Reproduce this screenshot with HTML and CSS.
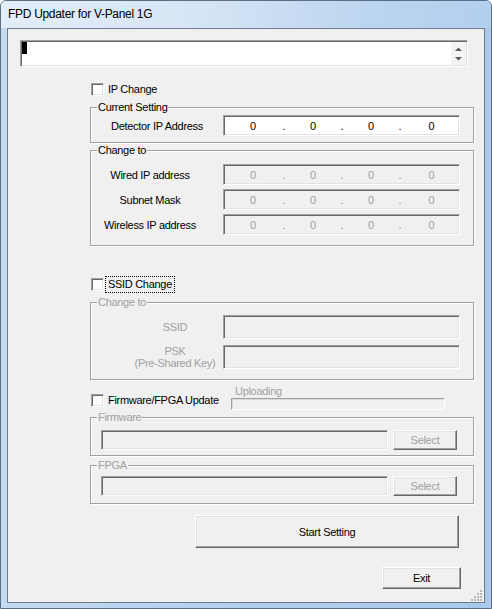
FILE: index.html
```html
<!DOCTYPE html>
<html>
<head>
<meta charset="utf-8">
<title>FPD Updater for V-Panel 1G</title>
<link rel="stylesheet" href="styles.css">
</head>
<body>
<div class="window">
  <div class="titlebar"><span class="title">FPD Updater for V-Panel 1G</span></div>
  <div class="frame-body">
    <div class="client">
      <div class="log">
        <span class="caret"></span>
        <div class="spin">
          <svg width="9" height="5" viewBox="0 0 9 5"><path d="M1 4 L4.5 0.5 L8 4 Z" fill="#5a5a5a"/></svg>
          <svg width="9" height="5" viewBox="0 0 9 5"><path d="M1 1 L4.5 4.5 L8 1 Z" fill="#5a5a5a"/></svg>
        </div>
      </div>

      <div class="main">
        <div class="check check-ip"><span class="box"></span><span class="check-label">IP Change</span></div>

        <fieldset class="group g-current">
          <legend>Current Setting</legend>
          <div class="rows">
            <div class="row">
              <span class="lbl lbl-current">Detector IP Address</span>
              <div class="ip ip-active"><span>0</span><i>.</i><span>0</span><i>.</i><span>0</span><i>.</i><span>0</span></div>
            </div>
          </div>
        </fieldset>

        <fieldset class="group g-change">
          <legend>Change to</legend>
          <div class="rows">
            <div class="row">
              <span class="lbl lbl-change">Wired IP address</span>
              <div class="ip ip-disabled"><span>0</span><i>.</i><span>0</span><i>.</i><span>0</span><i>.</i><span>0</span></div>
            </div>
            <div class="row">
              <span class="lbl lbl-change">Subnet Mask</span>
              <div class="ip ip-disabled"><span>0</span><i>.</i><span>0</span><i>.</i><span>0</span><i>.</i><span>0</span></div>
            </div>
            <div class="row">
              <span class="lbl lbl-change">Wireless IP address</span>
              <div class="ip ip-disabled"><span>0</span><i>.</i><span>0</span><i>.</i><span>0</span><i>.</i><span>0</span></div>
            </div>
          </div>
        </fieldset>

        <div class="check check-ssid"><span class="box"></span><span class="check-label focus">SSID Change</span></div>

        <fieldset class="group g-ssid disabled">
          <legend>Change to</legend>
          <div class="rows">
            <div class="row">
              <span class="lbl lbl-ssid">SSID</span>
              <div class="edit edit-ssid"></div>
            </div>
            <div class="row">
              <span class="lbl lbl-ssid">PSK<br>(Pre-Shared Key)</span>
              <div class="edit edit-ssid"></div>
            </div>
          </div>
        </fieldset>

        <div class="fw-row">
          <div class="check check-fw"><span class="box"></span><span class="check-label">Firmware/FPGA Update</span></div>
          <div class="upload">
            <span class="upload-label">Uploading</span>
            <div class="progress"></div>
          </div>
        </div>

        <fieldset class="group g-fw disabled">
          <legend>Firmware</legend>
          <div class="file-row">
            <div class="edit edit-file"></div>
            <div class="btn btn-select">Select</div>
          </div>
        </fieldset>

        <fieldset class="group g-fpga disabled">
          <legend>FPGA</legend>
          <div class="file-row">
            <div class="edit edit-file"></div>
            <div class="btn btn-select">Select</div>
          </div>
        </fieldset>

        <div class="btn btn-start">Start Setting</div>
        <div class="btn btn-exit">Exit</div>
      </div>

      <svg class="grip" width="12" height="12" viewBox="0 0 12 12">
        <g fill="#b8b8b8">
          <rect x="9" y="1" width="2" height="2"/>
          <rect x="6" y="4" width="2" height="2"/><rect x="9" y="4" width="2" height="2"/>
          <rect x="3" y="7" width="2" height="2"/><rect x="6" y="7" width="2" height="2"/><rect x="9" y="7" width="2" height="2"/>
          <rect x="0" y="10" width="2" height="2"/><rect x="3" y="10" width="2" height="2"/><rect x="6" y="10" width="2" height="2"/><rect x="9" y="10" width="2" height="2"/>
        </g>
      </svg>
    </div>
  </div>
</div>
</body>
</html>
```

FILE: styles.css
```css
* { box-sizing: border-box; }
html, body { margin: 0; padding: 0; }
body {
  width: 492px;
  height: 609px;
  overflow: hidden;
  font-family: "Liberation Sans", Arial, sans-serif;
  font-size: 11px;
  letter-spacing: -0.3px;
  color: #000;
  background: #fff;
}

.window {
  width: 492px;
  height: 609px;
  display: flex;
  flex-direction: column;
  border: 1px solid #5b6f84;
  border-radius: 6px 6px 0 0;
  background: linear-gradient(to right, #c4daf1, #b3cfee 50%, #a9c8ec);
}

.titlebar {
  height: 27px;
  flex: none;
  display: flex;
  align-items: center;
  padding-left: 7px;
  padding-bottom: 1px;
  border-radius: 5px 5px 0 0;
  background: linear-gradient(to right, #e3edf8 0%, #d6e5f5 40%, #bcd5f0 75%, #b2cfee 100%);
}
.title {
  font-size: 12px;
  letter-spacing: -0.3px;
  color: #000;
}

.frame-body {
  flex: 1;
  display: flex;
  padding: 0 6px 5px 6px;
}

.client {
  flex: 1;
  position: relative;
  display: flex;
  flex-direction: column;
  background: #f0f0f0;
  border: 1px solid #6c7b8b;
}

/* log box */
.log {
  margin: 11px 0 0 12px;
  width: 448px;
  height: 27px;
  display: flex;
  justify-content: space-between;
  background: #fff;
  border-top: 1px solid #a0a0a0;
  border-left: 1px solid #a0a0a0;
  border-right: 1px solid #fff;
  border-bottom: 1px solid #fff;
  box-shadow: inset 1px 1px 0 #696969, inset -1px -1px 0 #e3e3e3;
}
.caret {
  width: 5px;
  height: 12px;
  margin: 1px 0 0 1px;
  background: #000;
}
.spin {
  width: 15px;
  display: flex;
  flex-direction: column;
  justify-content: space-between;
  align-items: center;
  padding: 5px 1px 4px 0;
  background: #f4f4f4;
  margin: 1px 1px 1px 0;
}
.spin svg { display: block; }

/* main column */
.main {
  margin-left: 82px;
  width: 384px;
  display: flex;
  flex-direction: column;
  align-items: flex-start;
}

.check {
  display: flex;
  align-items: center;
  height: 13px;
  margin-left: 1px;
  gap: 4px;
  line-height: 13px;
}
.box {
  width: 13px;
  height: 13px;
  flex: none;
  background: #fff;
  border-top: 1px solid #a0a0a0;
  border-left: 1px solid #a0a0a0;
  border-right: 1px solid #fff;
  border-bottom: 1px solid #fff;
  box-shadow: inset 1px 1px 0 #696969, inset -1px -1px 0 #e3e3e3;
}
.check-label.focus {
  outline: 1px dotted #000;
  outline-offset: 1px;
  padding: 0 1px;
  margin-left: -1px;
}
.check-ip { margin-top: 16px; }
.check-ssid { margin-top: 32px; }

/* group boxes */
.group {
  margin: 0;
  padding: 0;
  min-width: 0;
  width: 384px;
  border: 1px solid #a0a0a0;
  box-shadow: inset 1px 1px 0 #fff, 1px 1px 0 #fff;
}
.group legend {
  margin-left: 6px;
  padding: 0 1px;
  line-height: 13px;
  height: 13px;
  background: #f0f0f0;
}
.group.disabled legend { color: #a0a0a0; }

.g-current { margin-top: 5px; }
.g-current .rows { padding: 1px 0 6px 0; }
.g-change { margin-top: 1px; }
.g-change .rows { padding: 7px 0 10px 0; display: flex; flex-direction: column; gap: 4px; }
.g-ssid { margin-top: 5px; }
.g-ssid .rows { padding: 6px 0 10px 0; display: flex; flex-direction: column; gap: 6px; }

.row {
  display: flex;
  align-items: center;
}
.lbl {
  flex: none;
  text-align: center;
  line-height: 12px;
}
.lbl-current { width: 132px; }
.lbl-change { width: 118px; margin-right: 14px; }
.lbl-ssid { width: 132px; padding-left: 36px; color: #a0a0a0; }

/* IP controls */
.ip {
  width: 237px;
  height: 21px;
  display: grid;
  grid-template-columns: 54px 8px 50px 8px 50px 8px 1fr;
  align-items: center;
  padding-left: 2px;
  border-top: 1px solid #a0a0a0;
  border-left: 1px solid #a0a0a0;
  border-right: 1px solid #fff;
  border-bottom: 1px solid #fff;
  box-shadow: inset 1px 1px 0 #696969, inset -1px -1px 0 #e3e3e3;
}
.ip span, .ip i { text-align: center; font-style: normal; }
.ip-active { background: #fff; color: #000; }
.ip-disabled { background: #f0f0f0; color: #a0a0a0; }
.ip-disabled i { color: #8a8a8a; }

.edit {
  background: #f0f0f0;
  border-top: 1px solid #a0a0a0;
  border-left: 1px solid #a0a0a0;
  border-right: 1px solid #fff;
  border-bottom: 1px solid #fff;
  box-shadow: inset 1px 1px 0 #696969, inset -1px -1px 0 #e3e3e3;
}
.edit-ssid { width: 237px; height: 24px; }

/* firmware row */
.fw-row {
  margin-top: 6px;
  display: flex;
  align-items: flex-start;
}
.check-fw {
  width: 140px;
  margin-top: 8px;
}
.upload {
  display: flex;
  flex-direction: column;
}
.upload-label {
  height: 12px;
  line-height: 11px;
  padding-left: 4px;
  color: #a0a0a0;
}
.progress {
  width: 214px;
  height: 12px;
  border-top: 1px solid #a0a0a0;
  border-left: 1px solid #a0a0a0;
  border-right: 1px solid #fff;
  border-bottom: 1px solid #fff;
  box-shadow: 1px 1px 0 #d8d8d8 inset;
}

.g-fw { margin-top: 1px; }
.g-fw .file-row { padding: 6px 0 5px 10px; }
.g-fpga { margin-top: 3px; }
.g-fpga .file-row { padding: 4px 0 7px 10px; }
.file-row {
  display: flex;
  gap: 5px;
}
.edit-file { width: 287px; height: 20px; }

/* buttons */
.btn {
  display: flex;
  align-items: center;
  justify-content: center;
  background: #f0f0f0;
  border-top: 1px solid #fff;
  border-left: 1px solid #fff;
  border-right: 1px solid #696969;
  border-bottom: 1px solid #696969;
  box-shadow: inset -1px -1px 0 #a0a0a0, inset 1px 1px 0 #e3e3e3;
  line-height: 12px;
}
.btn-select {
  width: 64px;
  height: 20px;
  color: #a0a0a0;
}
.btn-start {
  margin: 11px 0 0 105px;
  width: 264px;
  height: 33px;
}
.btn-exit {
  margin: 19px 0 0 292px;
  width: 79px;
  height: 22px;
}

.grip {
  position: absolute;
  right: 1px;
  bottom: 1px;
}
```
